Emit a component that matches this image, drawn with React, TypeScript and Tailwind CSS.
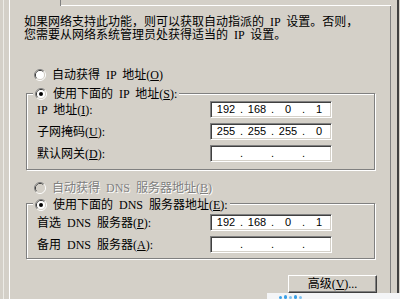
import React from 'react';

// Classic Win2000-style TCP/IP properties page (general tab, partially cropped).

const Radio: React.FC<{ checked?: boolean; disabled?: boolean }> = ({ checked, disabled }) => (
  <svg width="12" height="12" viewBox="0 0 12 12" className="shrink-0">
    <path d="M2.11 9.89 A5.5 5.5 0 0 1 9.89 2.11" fill="none" stroke="#808080" />
    <path d="M9.89 2.11 A5.5 5.5 0 0 1 2.11 9.89" fill="none" stroke="#ffffff" />
    <path d="M2.82 9.18 A4.5 4.5 0 0 1 9.18 2.82" fill="none" stroke="#404040" />
    <path d="M9.18 2.82 A4.5 4.5 0 0 1 2.82 9.18" fill="none" stroke="#d4d0c8" />
    <circle cx="6" cy="6" r="4" fill={disabled ? '#d4d0c8' : '#ffffff'} />
    {checked && <circle cx="6" cy="6" r="2" fill={disabled ? '#808080' : '#000000'} />}
  </svg>
);

const Key: React.FC<{ k: string }> = ({ k }) => (
  <>(<span className="underline underline-offset-1">{k}</span>)</>
);

const IpField: React.FC<{ value?: [string, string, string, string] }> = ({ value }) => {
  const parts = value ?? ['', '', '', ''];
  return (
    <div className="flex items-center w-[122px] h-[17px] bg-white border border-t-[#808080] border-l-[#808080] border-b-white border-r-white shadow-[inset_1px_1px_0_#404040,inset_-1px_-1px_0_#d4d0c8] pl-[3px] font-['Liberation_Sans',sans-serif] text-[11px] leading-[13px] [word-spacing:0]">
      {parts.map((p, i) => (
        <React.Fragment key={i}>
          {i > 0 && <span className="w-[7px] text-center">.</span>}
          <span className="w-[24px] text-center">{p}</span>
        </React.Fragment>
      ))}
    </div>
  );
};

const FieldRow: React.FC<{ label: React.ReactNode; value?: [string, string, string, string] }> = ({ label, value }) => (
  <div className="flex items-center h-[17px]">
    <div className="w-[173px] whitespace-nowrap">{label}</div>
    <IpField value={value} />
  </div>
);

// Etched group frame with a radio button sitting on its top edge.
const Group: React.FC<{ legend: React.ReactNode; legendTop: string; className: string; children: React.ReactNode }> = ({ legend, legendTop, className, children }) => (
  <div className={`relative ml-[16px] w-[349px] border border-[#808080] shadow-[inset_1px_1px_0_#fff,1px_1px_0_#fff] ${className}`}>
    <div className={`absolute left-[6px] ${legendTop} flex items-center gap-[6px] px-[2px] bg-[#d4d0c8] whitespace-nowrap h-[12px]`}>
      <Radio checked />
      <span>{legend}</span>
    </div>
    {children}
  </div>
);

export default function App() {
  return (
    <div className="relative w-[400px] h-[299px] overflow-hidden bg-[#d4d0c8] text-black font-['Liberation_Serif','Noto_Sans_CJK_SC',serif] text-[12px] leading-[12px] [word-spacing:3px]">
      <div className="flex h-full">
        <div className="w-[9px] h-full flex">
          <div className="w-[3px]" />
          <div className="w-[1px] h-full bg-[#ecebe6]" />
        </div>

        <div className="flex flex-col w-[382px] h-full">
          <div className="flex h-[6px]">
            <div className="w-[52px] h-full border-l border-white border-r border-r-[#808080]" />
            <div className="flex-1 h-full border-b border-white" />
          </div>

          <div className="flex-1 flex flex-col border-l border-white border-r border-r-[#808080]">
            <div className="mt-[10px] ml-[14px] whitespace-nowrap leading-[13px]">
              <p>如果网络支持此功能，则可以获取自动指派的 IP 设置。否则，</p>
              <p>您需要从网络系统管理员处获得适当的 IP 设置。</p>
            </div>

            <div className="mt-[27px] ml-[24px] flex items-center gap-[6px] h-[12px] whitespace-nowrap">
              <Radio />
              <span>自动获得 IP 地址<Key k="O" /></span>
            </div>

            <Group legend={<>使用下面的 IP 地址<Key k="S" />:</>} legendTop="-top-[6px]" className="mt-[12px] h-[77px]">
              <div className="flex flex-col gap-[5px] pt-[7px] pl-[10px]">
                <FieldRow label={<>IP 地址<Key k="I" />:</>} value={['192', '168', '0', '1']} />
                <FieldRow label={<>子网掩码<Key k="U" />:</>} value={['255', '255', '255', '0']} />
                <FieldRow label={<>默认网关<Key k="D" />:</>} />
              </div>
            </Group>

            <div className="mt-[12px] ml-[24px] flex items-center gap-[6px] h-[12px] whitespace-nowrap text-[#808080] [text-shadow:1px_1px_0_#fff]">
              <Radio disabled />
              <span>自动获得 DNS 服务器地址<Key k="B" /></span>
            </div>

            <Group legend={<>使用下面的 DNS 服务器地址<Key k="E" />:</>} legendTop="-top-[5px]" className="mt-[9px] h-[56px]">
              <div className="flex flex-col gap-[5px] pt-[10px] pl-[10px]">
                <FieldRow label={<>首选 DNS 服务器<Key k="P" />:</>} value={['192', '168', '0', '1']} />
                <FieldRow label={<>备用 DNS 服务器<Key k="A" />:</>} />
              </div>
            </Group>

            <button className="mt-[16px] ml-[278px] w-[89px] h-[18px] flex items-center justify-center bg-[#d4d0c8] border border-t-white border-l-white border-b-[#404040] border-r-[#404040] shadow-[inset_-1px_-1px_0_#808080] whitespace-nowrap">
              高级<Key k="V" />...
            </button>
          </div>
        </div>

        <div className="flex-1 flex justify-end">
          <div className="w-[2px] h-full bg-[#404040]" />
          <div className="w-[1px] h-full bg-[#d4d0c8]" />
        </div>
      </div>

      <div className="absolute left-[267px] right-0 bottom-0 h-[6px] bg-[#f4f5f7] flex items-end gap-[2px] pl-[12px]">
        <span className="w-[3px] h-[3px] rounded-full bg-[#3aa0e6]" />
        <span className="w-[3px] h-[4px] rounded-full bg-[#3aa0e6]" />
        <span className="w-[3px] h-[3px] rounded-full bg-[#7fc2f0]" />
        <span className="w-[3px] h-[4px] rounded-full bg-[#3aa0e6]" />
        <span className="w-[3px] h-[3px] rounded-full bg-[#7fc2f0]" />
      </div>
    </div>
  );
}
